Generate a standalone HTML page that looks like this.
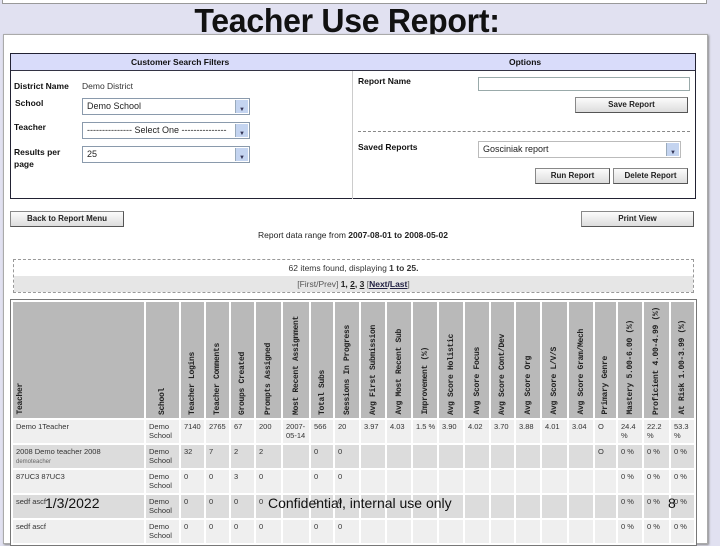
<!DOCTYPE html>
<html><head><meta charset="utf-8"><style>
*{margin:0;padding:0;box-sizing:border-box}
body{width:720px;height:540px;overflow:hidden;background:#e1e1f1;font-family:"Liberation Sans",sans-serif;position:relative;color:#111}
.a{position:absolute}
.top{left:2px;top:-2px;width:705px;height:6px;background:#fff;border:1px solid #999}
.title{left:0;width:694px;top:1px;text-align:center;font-size:33px;font-weight:bold;letter-spacing:-0.3px;transform:scaleX(0.97);transform-origin:347px 0;line-height:40px}
.panel{left:3px;top:34px;width:705px;height:510px;background:#fff;border:1px solid #aaa;box-shadow:1px 1px 2px #888}
.fbox{left:10px;top:53px;width:686px;height:146px;border:1px solid #223;background:#fff}
.hbar{left:0;top:0;width:684px;height:17px;background:#d9dcfa;border-bottom:1px solid #334;font-size:8.5px;font-weight:bold;line-height:16px}
.lb{font-size:8.5px;font-weight:bold}
.sel{height:17px;border:1px solid #8a9aac;background:#fff;font-size:9px;line-height:15px;padding-left:4px;color:#222}
.sel:after{content:"";position:absolute;right:1px;top:1px;width:12px;height:13px;background:#c4d4f0;border-left:1px solid #9ab}
.arr{position:absolute;right:4px;top:4px;font-size:6px;color:#335;z-index:2}
.btn{height:16px;border:1px solid #888;border-right-color:#555;border-bottom-color:#555;background:linear-gradient(#fbfbfb,#ddd);font-size:8px;font-weight:bold;text-align:center;line-height:14px;color:#222}
table{border-collapse:separate;border-spacing:2px;position:absolute;left:10px;top:299px;border:1px solid #777;background:#fff;table-layout:fixed}
td{font-size:7.5px;vertical-align:top;padding:2px 1px 0 3px;color:#333;overflow:hidden}
th{background:#b9b9b9;height:116px;vertical-align:bottom;padding:0 0 3px 0;position:relative}
th div{writing-mode:vertical-rl;transform:rotate(180deg);font-family:"Liberation Mono",monospace;font-size:8px;font-weight:bold;color:#222;white-space:nowrap;margin:0 auto;letter-spacing:-0.3px}
tr.r td{height:23px}
tr.l td{background:#efefef}
tr.g td{background:#dcdcdc}
small{font-size:6px;color:#666}
.ft{font-size:14px;color:#111;top:495px}
</style></head><body>
<div class="a top"></div>
<div class="a title">Teacher Use Report:</div>
<div class="a panel"></div>
<div class="a fbox">
 <div class="a hbar"><span class="a" style="left:120px">Customer Search Filters</span><span class="a" style="left:498px">Options</span></div>
 <div class="a" style="left:341px;top:17px;width:1px;height:128px;background:#ccc"></div>
 <div class="a lb" style="left:3px;top:27px">District Name</div>
 <div class="a" style="left:71px;top:27px;font-size:8.5px;color:#333">Demo District</div>
 <div class="a lb" style="left:4px;top:44px">School</div>
 <div class="a sel" style="left:71px;top:44px;width:168px">Demo School<span class="arr">▼</span></div>
 <div class="a lb" style="left:3px;top:68px">Teacher</div>
 <div class="a sel" style="left:71px;top:68px;width:168px">--------------- Select One ---------------<span class="arr">▼</span></div>
 <div class="a lb" style="left:3px;top:92px;line-height:12px">Results per<br>page</div>
 <div class="a sel" style="left:71px;top:92px;width:168px">25<span class="arr">▼</span></div>
 <div class="a lb" style="left:347px;top:22px">Report Name</div>
 <div class="a" style="left:467px;top:23px;width:212px;height:14px;border:1px solid #9aa"></div>
 <div class="a btn" style="left:564px;top:43px;width:113px">Save Report</div>
 <div class="a" style="left:347px;top:77px;width:332px;border-top:1px dashed #888"></div>
 <div class="a lb" style="left:347px;top:88px">Saved Reports</div>
 <div class="a sel" style="left:467px;top:87px;width:203px;border-color:#bbb">Gosciniak report<span class="arr">▼</span></div>
 <div class="a btn" style="left:524px;top:114px;width:75px">Run Report</div>
 <div class="a btn" style="left:602px;top:114px;width:75px">Delete Report</div>
</div>
<div class="a btn" style="left:10px;top:211px;width:114px">Back to Report Menu</div>
<div class="a btn" style="left:581px;top:211px;width:113px">Print View</div>
<div class="a" style="left:0;width:706px;top:230px;text-align:center;font-size:8.5px;color:#222">Report data range from <b>2007-08-01 to 2008-05-02</b></div>
<div class="a" style="left:13px;top:259px;width:681px;height:34px;border:1px dashed #999">
 <div class="a" style="left:0;top:3px;width:679px;text-align:center;font-size:8.5px;color:#333">62 items found, displaying <b>1 to 25.</b></div>
 <div class="a" style="left:0;top:16px;width:679px;height:16px;background:#e6e6e6;text-align:center;font-size:8.5px;line-height:16px;color:#555">[First/Prev] <b style="color:#222">1, <u>2</u>, <u>3</u></b> [<b style="color:#224"><u>Next</u>/<u>Last</u></b>]</div>
</div>
<table>
<colgroup><col style="width:131px"><col style="width:33px"><col style="width:23px"><col style="width:23px"><col style="width:23px"><col style="width:25px"><col style="width:26px"><col style="width:22px"><col style="width:24px"><col style="width:24px"><col style="width:24px"><col style="width:24px"><col style="width:24px"><col style="width:24px"><col style="width:23px"><col style="width:24px"><col style="width:25px"><col style="width:24px"><col style="width:21px"><col style="width:24px"><col style="width:25px"><col style="width:23px"></colgroup>
<tr><th style="text-align:left"><div style="margin:0 0 0 3px">Teacher</div></th><th><div>School</div></th><th><div>Teacher Logins</div></th><th><div>Teacher Comments</div></th><th><div>Groups Created</div></th><th><div>Prompts Assigned</div></th><th><div>Most Recent Assignment</div></th><th><div>Total Subs</div></th><th><div>Sessions In Progress</div></th><th><div>Avg First Submission</div></th><th><div>Avg Most Recent Sub</div></th><th><div>Improvement (%)</div></th><th><div>Avg Score Holistic</div></th><th><div>Avg Score Focus</div></th><th><div>Avg Score Cont/Dev</div></th><th><div>Avg Score Org</div></th><th><div>Avg Score L/V/S</div></th><th><div>Avg Score Gram/Mech</div></th><th><div>Primary Genre</div></th><th><div>Mastery 5.00-6.00 (%)</div></th><th><div>Proficient 4.00-4.99 (%)</div></th><th><div>At Risk 1.00-3.99 (%)</div></th></tr>
<tr class="r l"><td>Demo 1Teacher</td><td>Demo<br>School</td><td>7140</td><td>2765</td><td>67</td><td>200</td><td>2007-05-14</td><td>566</td><td>20</td><td>3.97</td><td>4.03</td><td>1.5 %</td><td>3.90</td><td>4.02</td><td>3.70</td><td>3.88</td><td>4.01</td><td>3.04</td><td>O</td><td>24.4 %</td><td>22.2 %</td><td>53.3 %</td></tr>
<tr class="r g"><td>2008 Demo teacher 2008<br><small>demoteacher</small></td><td>Demo<br>School</td><td>32</td><td>7</td><td>2</td><td>2</td><td></td><td>0</td><td>0</td><td></td><td></td><td></td><td></td><td></td><td></td><td></td><td></td><td></td><td>O</td><td>0 %</td><td>0 %</td><td>0 %</td></tr>
<tr class="r l"><td>87UC3 87UC3</td><td>Demo<br>School</td><td>0</td><td>0</td><td>3</td><td>0</td><td></td><td>0</td><td>0</td><td></td><td></td><td></td><td></td><td></td><td></td><td></td><td></td><td></td><td></td><td>0 %</td><td>0 %</td><td>0 %</td></tr>
<tr class="r g"><td>sedf ascf</td><td>Demo<br>School</td><td>0</td><td>0</td><td>0</td><td>0</td><td></td><td>0</td><td>0</td><td></td><td></td><td></td><td></td><td></td><td></td><td></td><td></td><td></td><td></td><td>0 %</td><td>0 %</td><td>0 %</td></tr>
<tr class="r l"><td>sedf ascf</td><td>Demo<br>School</td><td>0</td><td>0</td><td>0</td><td>0</td><td></td><td>0</td><td>0</td><td></td><td></td><td></td><td></td><td></td><td></td><td></td><td></td><td></td><td></td><td>0 %</td><td>0 %</td><td>0 %</td></tr>
</table>
<div class="a ft" style="left:45px">1/3/2022</div>
<div class="a ft" style="left:268px">Confidential, internal use only</div>
<div class="a ft" style="left:668px">8</div>
</body></html>
